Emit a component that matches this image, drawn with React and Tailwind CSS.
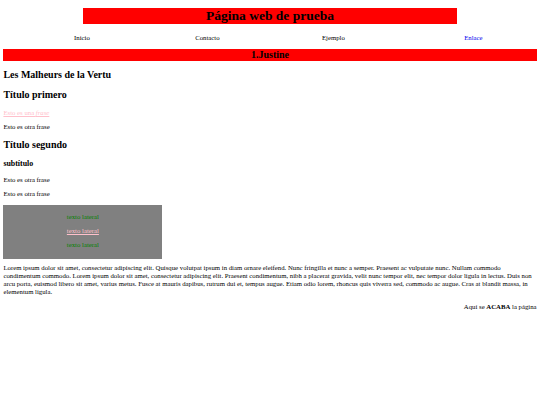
import React from 'react';

const NAV = [
    { label: 'Inicio', link: false },
    { label: 'Contacto', link: false },
    { label: 'Ejemplo', link: false },
    { label: 'Enlace', link: true },
];

const LOREM =
    'Lorem ipsum dolor sit amet, consectetur adipiscing elit. Quisque volutpat ipsum in diam ornare eleifend. Nunc fringilla et nunc a semper. Praesent ac vulputate nunc. Nullam commodo condimentum commodo. Lorem ipsum dolor sit amet, consectetur adipiscing elit. Praesent condimentum, nibh a placerat gravida, velit nunc tempor elit, nec tempor dolor ligula in lectus. Duis non arcu porta, euismod libero sit amet, varius metus. Fusce at mauris dapibus, rutrum dui et, tempus augue. Etiam odio lorem, rhoncus quis viverra sed, commodo ac augue. Cras at blandit massa, in elementum ligula.';

const Heading = ({ children, className = '' }) => (
    <h2 className={`h-[12px] text-[10px] leading-[12px] font-bold ${className}`}>{children}</h2>
);

const Para = ({ children, className = '' }) => (
    <p className={`h-[8px] text-[6.75px] leading-[8px] ${className}`}>{children}</p>
);

export default function App() {
    return (
        <div className="w-[540px] h-[405px] bg-white text-black font-['Liberation_Serif',serif] px-[3.4px] overflow-hidden">
            <h1 className="mt-[8px] mx-auto w-[374px] h-[16px] bg-[#ff0000] text-center text-[13.5px] leading-[16px] font-bold">
                Página web de prueba
            </h1>

            <nav className="mt-[10px] grid grid-cols-[157px_94px_158px_122px] text-[6.75px] leading-[8px]">
                {NAV.map((item) => (
                    <span
                        key={item.label}
                        className={`text-center ${item.link ? 'text-[#0000ee]' : 'text-black'}`}
                    >
                        {item.label}
                    </span>
                ))}
            </nav>

            <Heading className="mt-[7px] bg-[#ff0000] text-center">1.Justine</Heading>

            <Heading className="mt-[8px]">Les Malheurs de la Vertu</Heading>
            <Heading className="mt-[8px]">Título primero</Heading>

            <Para className="mt-[8px]">
                <a href="#" className="text-[#ffc0cb] underline">
                    Esto es una <i>frase</i>
                </a>
            </Para>
            <Para className="mt-[6px]">Esto es otra frase</Para>

            <Heading className="mt-[8px]">Título segundo</Heading>
            <h3 className="mt-[8px] h-[9px] text-[7.9px] leading-[9px] font-bold">subtítulo</h3>

            <Para className="mt-[8px]">Esto es otra frase</Para>
            <Para className="mt-[6px]">Esto es otra frase</Para>

            <aside className="mt-[7px] w-[159px] h-[54px] bg-[#808080] flex flex-col items-center pt-[8px] gap-[6px] text-[6.75px] leading-[8px]">
                <span className="text-[#008000]">texto lateral</span>
                <a href="#" className="text-[#ffc0cb] underline">texto lateral</a>
                <span className="text-[#008000]">texto lateral</span>
            </aside>

            <p className="mt-[5px] text-[6.75px] leading-[8px]">{LOREM}</p>

            <p className="mt-[7px] text-right text-[6.75px] leading-[8px]">
                Aquí se <b>ACABA</b> la página
            </p>
        </div>
    );
}
